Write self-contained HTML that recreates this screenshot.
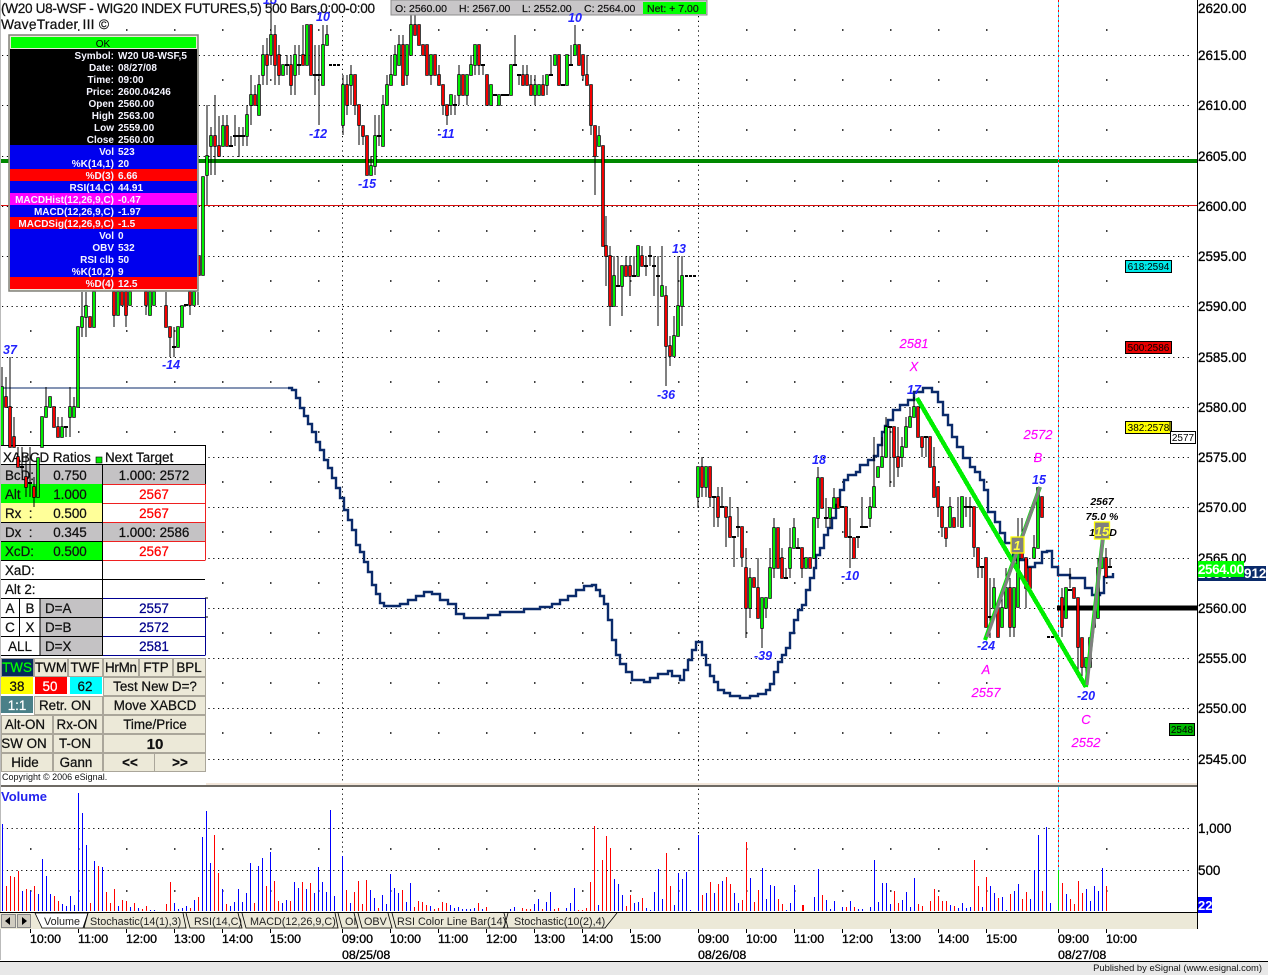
<!DOCTYPE html>
<html><head><meta charset="utf-8"><title>WaveTrader chart</title>
<style>
html,body{margin:0;padding:0;background:#fff}
svg{display:block;font-family:"Liberation Sans",Arial,sans-serif}
.ax{font-size:13.4px;fill:#000;stroke:#000;stroke-width:.3}
.t{font-size:12.4px;fill:#000;stroke:#000;stroke-width:.35;text-anchor:start}
.bl{font-size:12.5px;font-style:italic;font-weight:bold;fill:#2222ff;text-anchor:middle}
.mg{font-size:13px;font-style:italic;fill:#ff00ff;stroke:#ff00ff;stroke-width:.15;text-anchor:middle}
.bk{font-size:10.5px;font-style:italic;font-weight:bold;fill:#000;text-anchor:middle}
.l{font-size:10px;font-weight:bold;fill:#f4f4ff;text-anchor:end}
.v{font-size:10px;font-weight:bold;fill:#f4f4ff}
.tb{font-size:13.4px;fill:#111;stroke:#111;stroke-width:.25}
.c{text-anchor:middle}
.bt{font-size:13.4px;fill:#111;stroke:#111;stroke-width:.25;text-anchor:middle}
.br{fill:#ece9d8;stroke:#aaa69a;stroke-width:1}
.tag{font-size:10px;fill:#000;text-anchor:middle}
.o{font-size:10.5px;fill:#111;stroke:#111;stroke-width:.2}
.tab{font-size:10.8px;fill:#222}
</style></head><body>
<svg width="1268" height="975" viewBox="0 0 1268 975" xmlns="http://www.w3.org/2000/svg">
<defs>
<path id="dots" d="M30 0h1.5M78 0h1.5M126 0h1.5M174 0h1.5M222 0h1.5M270 0h1.5M318 0h1.5M390 0h1.5M438 0h1.5M486 0h1.5M534 0h1.5M582 0h1.5M630 0h1.5M678 0h1.5M746 0h1.5M794 0h1.5M842 0h1.5M890 0h1.5M938 0h1.5M986 0h1.5M1106 0h1.5" stroke="#000" stroke-width="1.5"/>
</defs>
<rect width="1268" height="975" fill="#fff"/>
<!-- dotted grid -->
<path d="M2 55.5H1190M2 105.5H1190M2 156.5H1190M2 206.5H1190M2 256.5H1190M2 306.5H1190M2 357.5H1190M2 407.5H1190M2 457.5H1190M2 507.5H1190M2 558.5H1190M2 608.5H1190M2 658.5H1190M2 708.5H1190M2 759.5H1190M2 828.5H1190M2 870.5H1190" stroke="#000" stroke-width="1" stroke-dasharray="1.2 3.6"/>
<use href="#dots" y="30"/><use href="#dots" y="80"/><use href="#dots" y="130"/><use href="#dots" y="181"/><use href="#dots" y="231"/><use href="#dots" y="281"/><use href="#dots" y="331"/><use href="#dots" y="382"/><use href="#dots" y="432"/><use href="#dots" y="482"/><use href="#dots" y="532"/><use href="#dots" y="583"/><use href="#dots" y="633"/><use href="#dots" y="683"/><use href="#dots" y="733"/><use href="#dots" y="849"/><use href="#dots" y="891"/>
<path d="M342.5 16V912M698.5 16V912" stroke="#000" stroke-width="1" stroke-dasharray="1.2 3.6"/>
<path d="M0 205.5H1197" stroke="#d81010" stroke-width="1"/>
<path d="M1 161H1197" stroke="#008800" stroke-width="4"/>
<path d="M1058.5 0V870" stroke="#30e0ff" stroke-width="1"/>
<path d="M1058.5 0V870" stroke="#ff0000" stroke-width="1" stroke-dasharray="2 3"/>
<path d="M1057 608H1197" stroke="#000" stroke-width="5"/>
<!-- navy stepped line -->
<path d="M0 388H288" stroke="#0a2a6a" stroke-width="1" fill="none"/>
<path fill="none" stroke="#0a2a6a" stroke-width="2.4" d="M288 388H292V390H296V398H300V408H304V416H308V424H312V432H316V442H320V450H324V460H328V468H332V478H336V488H340V498H344V510H348V520H352V530H356V545H360V552H364V562H368V572H372V585H376V594H380V603H384V606H392V606H400V604H408V600H416V596H424V592H432V594H440V600H448V604H456V614H464V618H476V618H488V615H500V612H512V612H524V609H540V607H552V604H560V600H568V596H576V590H584V586H592V585H596V590H600V596H604V604H608V620H612V640H616V655H620V664H626V672H632V680H644V682H650V678H658V674H668V671H672V676H680V680H684V670H688V660H692V650H696V642H700V642H702V655H706V665H710V676H714V682H718V690H724V693H730V696H740V698H750V696H758V694H766V690H770V684H774V672H778V662H782V655H786V648H790V633H794V620H798V610H802V605H806V590H810V578H814V568H816V555H820V548H824V535H828V528H832V518H836V505H840V490H844V480H848V475H856V472H860V465H868V460H874V456H878V445H882V432H885V426H888V420H893V410H900V405H908V400H914V392H923V388H932V392H938V402H943V415H948V425H952V437H957V447H963V458H970V467H975V472H980V480H984V490H988V512H995V522H1000V533H1005V543H1013V560H1027V567H1035V563H1042V552H1047V551H1052V567H1058V575H1070V578H1080V578H1085V588H1092V595H1100V593H1104V577H1113V573"/>
<!-- wicks -->
<path fill="none" stroke="#000" stroke-width="1" d="M2 367V467M6 377V397M10 357V407M14 417V447M46 387V407M58 417V427M62 417V427M66 427V437M70 387V437M74 397V407M82 292V337M86 292V337M114 315V327M126 315V327M146 305V315M166 292V306M170 337V357M174 327V357M190 305V315M198 292V305M207 105V205M211 127V175M215 95V175M219 116V157M223 115V146M227 115V126M231 136V146M235 115V146M239 127V157M243 127V146M247 105V146M251 75V125M255 85V105M259 75V115M263 45V85M267 38V85M271 0V65M275 25V85M279 45V85M287 55V75M291 55V95M295 45V95M299 45V75M303 25V65M315 45V95M319 45V125M323 25V85M327 25V35M343 75V135M347 75V115M351 65V105M355 75V115M359 105V145M363 126V145M371 156V175M375 115V175M379 115V146M383 95V146M387 75V105M391 55V85M395 45V75M399 35V65M403 35V85M407 45V85M411 15V55M415 15V35M431 55V85M439 65V85M443 105V115M447 105V125M451 95V115M455 95V115M459 65V105M467 75V105M471 55V75M475 45V75M479 45V75M483 65V75M515 35V65M519 75V85M523 65V85M527 65V85M531 75V95M535 75V105M543 75V95M547 75V95M551 55V75M571 45V65M575 25V55M583 55V80M587 55V85M591 125V135M595 156V195M599 126V136M606 216V286M610 246V326M614 256V306M618 256V286M622 266V316M626 256V266M630 256V296M634 256V276M642 246V256M646 256V276M650 246V266M654 256V296M658 256V326M662 246V286M666 286V386M670 336V366M674 316V336M678 256V306M682 256V326M698 497V508M702 457V497M706 487V497M710 497V507M714 497V527M718 487V527M722 487V507M726 517V547M730 497V517M734 537V567M738 507V537M742 557V567M746 548V638M750 568V618M758 558V588M762 628V648M766 608V618M770 548V568M774 518V578M782 548V558M786 568V578M790 528V578M794 518V528M798 538V548M802 568V578M818 467V528M826 498V528M830 518V528M834 488V498M850 518V568M858 537V548M862 497V527M870 497V527M874 437V487M882 437V457M886 417V427M890 427V487M894 457V487M898 427V477M902 437V467M906 417V427M910 407V417M914 397V407M922 447V457M926 437V457M934 447V467M938 507V517M942 527V537M946 538V547M950 497V507M958 497V527M966 497V517M970 497V527M974 547V557M978 567V578M982 567V578M990 578V638M994 578V588M1002 598V608M1006 568V588M1010 578V637M1014 627V637M1018 518V538M1022 518V538M1026 588V608M1034 535V548M1062 588V598M1062 627V637M1070 568V588M1078 647V677M1082 667V677M1086 667V687M1098 558V568M1102 538V558M1106 548V558M1110 558V567"/>
<!-- doji -->
<path fill="none" stroke="#000" stroke-width="2" d="M64 427h4M172 347h4M184 305h4M229 146h4M233 136h4M237 136h4M241 136h4M285 65h4M297 65h4M313 75h4M317 75h4M377 136h4M453 105h4M481 65h4M493 95h4M501 95h4M505 95h4M513 65h4M517 75h4M549 75h4M561 85h4M569 65h4M616 286h4M632 276h4M644 266h4M648 256h4M652 266h4M656 276h4M712 497h4M720 507h4M732 537h4M736 527h4M784 578h4M796 548h4M824 518h4M840 507h4M848 537h4M856 537h4M860 527h4M864 527h4M888 427h4M924 437h4M964 507h4M968 507h4M980 567h4M988 617h4M1068 590h4M1108 567h4"/>
<path fill="none" stroke="#000" stroke-width="2" stroke-dasharray="3 1" d="M329 65H341M685 276H697M1047 637H1058"/>
<!-- green bodies -->
<path fill="#00ee00" stroke="#000" stroke-width="1.5" paint-order="stroke" d="M1 387h2V467h-2zM81 317h2V327h-2zM85 306h2V317h-2zM93 292h2V327h-2zM117 292h2V315h-2zM129 292h2V305h-2zM149 292h2V315h-2zM153 292h2V305h-2zM177 327h2V347h-2zM181 306h2V327h-2zM193 292h2V305h-2zM202 177h2V275h-2zM206 156h2V175h-2zM210 136h2V146h-2zM222 126h2V146h-2zM246 115h2V136h-2zM250 95h2V105h-2zM258 85h2V115h-2zM262 55h2V75h-2zM270 35h2V55h-2zM282 65h2V75h-2zM294 55h2V75h-2zM306 25h2V65h-2zM322 45h2V85h-2zM326 35h2V45h-2zM342 85h2V125h-2zM350 75h2V85h-2zM370 166h2V175h-2zM374 136h2V166h-2zM382 105h2V146h-2zM386 85h2V105h-2zM390 75h2V85h-2zM394 55h2V75h-2zM398 45h2V65h-2zM406 45h2V75h-2zM410 25h2V55h-2zM430 55h2V75h-2zM450 95h2V105h-2zM458 75h2V95h-2zM466 75h2V95h-2zM470 65h2V75h-2zM474 45h2V65h-2zM490 85h2V105h-2zM498 95h2V105h-2zM510 65h2V95h-2zM534 85h2V95h-2zM538 85h2V95h-2zM546 75h2V85h-2zM554 55h2V65h-2zM566 55h2V85h-2zM574 45h2V55h-2zM598 136h2V146h-2zM613 276h2V306h-2zM621 266h2V286h-2zM637 246h2V276h-2zM661 286h2V296h-2zM673 336h2V356h-2zM677 306h2V336h-2zM681 276h2V306h-2zM697 467h2V497h-2zM705 467h2V487h-2zM749 578h2V608h-2zM761 598h2V628h-2zM765 598h2V608h-2zM769 568h2V598h-2zM773 528h2V568h-2zM789 548h2V568h-2zM793 528h2V548h-2zM805 558h2V568h-2zM813 518h2V558h-2zM817 478h2V518h-2zM829 508h2V518h-2zM833 498h2V508h-2zM869 507h2V518h-2zM873 487h2V507h-2zM877 467h2V477h-2zM881 457h2V467h-2zM885 427h2V457h-2zM901 447h2V457h-2zM905 427h2V447h-2zM909 417h2V427h-2zM913 407h2V417h-2zM949 507h2V527h-2zM961 497h2V527h-2zM993 588h2V608h-2zM1001 608h2V627h-2zM1005 588h2V608h-2zM1013 588h2V627h-2zM1017 538h2V607h-2zM1033 548h2V558h-2zM1037 488h2V548h-2zM1065 588h2V618h-2zM1085 658h2V667h-2zM1089 638h2V667h-2zM1093 618h2V627h-2zM1097 568h2V618h-2zM1101 558h2V568h-2z"/>
<!-- red bodies -->
<path fill="#f40000" stroke="#000" stroke-width="1.5" paint-order="stroke" d="M89 317h2V327h-2zM113 292h2V315h-2zM121 292h2V305h-2zM125 292h2V315h-2zM145 292h2V305h-2zM165 306h2V327h-2zM169 327h2V337h-2zM189 292h2V305h-2zM198 256h2V275h-2zM214 136h2V146h-2zM218 146h2V156h-2zM226 126h2V146h-2zM254 95h2V105h-2zM266 55h2V65h-2zM274 35h2V65h-2zM278 55h2V75h-2zM290 65h2V85h-2zM302 55h2V65h-2zM310 25h2V75h-2zM346 85h2V105h-2zM354 75h2V105h-2zM358 105h2V125h-2zM362 126h2V136h-2zM366 136h2V175h-2zM402 45h2V85h-2zM414 25h2V35h-2zM418 25h2V45h-2zM422 45h2V55h-2zM426 45h2V75h-2zM434 55h2V75h-2zM438 75h2V85h-2zM442 85h2V105h-2zM446 105h2V115h-2zM462 75h2V95h-2zM478 45h2V65h-2zM486 75h2V105h-2zM522 75h2V85h-2zM526 75h2V85h-2zM530 85h2V95h-2zM542 85h2V95h-2zM558 55h2V85h-2zM578 45h2V65h-2zM582 55h2V75h-2zM586 75h2V85h-2zM590 85h2V125h-2zM594 126h2V156h-2zM602 146h2V246h-2zM605 246h2V256h-2zM609 256h2V306h-2zM625 266h2V276h-2zM629 266h2V276h-2zM641 256h2V266h-2zM665 296h2V346h-2zM669 346h2V356h-2zM701 467h2V487h-2zM709 467h2V497h-2zM717 497h2V517h-2zM725 507h2V517h-2zM729 517h2V537h-2zM741 527h2V557h-2zM745 568h2V608h-2zM753 578h2V587h-2zM757 588h2V618h-2zM777 528h2V568h-2zM781 558h2V578h-2zM801 548h2V568h-2zM809 558h2V568h-2zM821 478h2V508h-2zM837 498h2V508h-2zM845 507h2V537h-2zM853 538h2V558h-2zM893 427h2V457h-2zM897 457h2V467h-2zM917 407h2V437h-2zM921 437h2V447h-2zM929 437h2V467h-2zM933 467h2V497h-2zM937 487h2V507h-2zM941 507h2V527h-2zM945 528h2V538h-2zM953 518h2V527h-2zM973 507h2V547h-2zM977 548h2V567h-2zM985 558h2V627h-2zM997 608h2V637h-2zM1009 588h2V627h-2zM1021 538h2V558h-2zM1025 558h2V588h-2zM1029 568h2V588h-2zM1041 497h2V517h-2zM1061 598h2V627h-2zM1073 588h2V598h-2zM1077 598h2V647h-2zM1081 638h2V667h-2zM1105 558h2V577h-2z"/>
<!-- pattern lines -->
<path d="M917 398L1086 687" stroke="#00ee00" stroke-width="4.5" fill="none" shape-rendering="crispEdges"/>
<path d="M985 640L1040 487M1086 687L1103 537" stroke="#00ee00" stroke-width="4" fill="none"/>
<path d="M987 637L1040 487M1087 685L1103 537" stroke="#808080" stroke-width="3.2" fill="none"/>
<rect x="1011" y="537" width="13" height="16" fill="#808080" stroke="#ffff00" stroke-width="1.3"/>
<rect x="1094.500" y="522" width="15" height="17" fill="#808080" stroke="#ffff00" stroke-width="1.3"/>
<text x="1017" y="550" font-size="13" font-style="italic" font-weight="bold" fill="#ffff40" text-anchor="middle">1</text>
<text x="1102" y="536" font-size="13" font-style="italic" font-weight="bold" fill="#ffff40" text-anchor="middle">15</text>
<!-- volume bars -->
<path fill="none" stroke="#0000ff" stroke-width="1" d="M2.500 911V824M22.500 911V891M30.500 911V891M38.500 911V894M42.500 911V859M46.500 911V876M50.500 911V894M62.500 911V904M66.500 911V906M70.500 911V896M74.500 911V905M78.500 911V793M82.500 911V813M86.500 911V845M94.500 911V861M102.500 911V867M118.500 911V906M130.500 911V907M138.500 911V908M150.500 911V910M154.500 911V910M174.500 911V903M178.500 911V909M182.500 911V908M186.500 911V906M194.500 911V900M202.500 911V837M206.500 911V811M210.500 911V863M222.500 911V889M230.500 911V906M234.500 911V902M238.500 911V889M242.500 911V902M246.500 911V893M250.500 911V863M258.500 911V866M262.500 911V858M270.500 911V852M282.500 911V903M286.500 911V900M294.500 911V882M298.500 911V888M306.500 911V889M314.500 911V893M318.500 911V867M322.500 911V882M326.500 911V892M330.500 911V810M334.500 911V896M342.500 911V856M350.500 911V903M370.500 911V890M374.500 911V898M382.500 911V895M386.500 911V904M390.500 911V874M394.500 911V888M398.500 911V893M406.500 911V902M410.500 911V883M430.500 911V906M450.500 911V905M454.500 911V908M458.500 911V907M462.500 911V909M466.500 911V909M470.500 911V909M474.500 911V908M482.500 911V909M510.500 911V909M514.500 911V907M534.500 911V904M538.500 911V899M546.500 911V902M550.500 911V892M566.500 911V908M570.500 911V903M574.500 911V888M598.500 911V905M614.500 911V879M618.500 911V884M622.500 911V895M634.500 911V903M638.500 911V902M646.500 911V908M650.500 911V910M654.500 911V892M658.500 911V869M662.500 911V899M674.500 911V905M678.500 911V873M682.500 911V879M686.500 911V872M690.500 911V910M698.500 911V835M706.500 911V893M714.500 911V893M722.500 911V881M734.500 911V893M738.500 911V903M750.500 911V878M762.500 911V868M766.500 911V899M770.500 911V885M774.500 911V886M786.500 911V910M790.500 911V903M794.500 911V885M814.500 911V897M818.500 911V869M826.500 911V900M830.500 911V909M834.500 911V901M842.500 911V907M850.500 911V901M858.500 911V909M862.500 911V909M870.500 911V907M874.500 911V860M878.500 911V902M882.500 911V883M886.500 911V883M890.500 911V904M902.500 911V900M906.500 911V892M910.500 911V907M914.500 911V878M950.500 911V905M958.500 911V908M962.500 911V903M966.500 911V908M970.500 911V907M982.500 911V907M990.500 911V886M994.500 911V893M1002.500 911V897M1006.500 911V910M1014.500 911V891M1018.500 911V884M1030.500 911V899M1034.500 911V870M1038.500 911V835M1046.500 911V827M1050.500 911V903M1066.500 911V894M1086.500 911V889M1090.500 911V901M1094.500 911V886M1098.500 911V891M1102.500 911V868"/>
<path fill="none" stroke="#ff0000" stroke-width="1" d="M6.500 911V886M10.500 911V876M14.500 911V877M18.500 911V871M26.500 911V889M34.500 911V886M54.500 911V896M58.500 911V901M90.500 911V903M98.500 911V866M106.500 911V892M110.500 911V903M114.500 911V889M122.500 911V900M126.500 911V901M134.500 911V903M142.500 911V909M146.500 911V906M166.500 911V904M170.500 911V882M190.500 911V908M198.500 911V897M214.500 911V835M218.500 911V873M226.500 911V904M254.500 911V903M266.500 911V886M274.500 911V881M278.500 911V901M290.500 911V901M302.500 911V882M310.500 911V883M346.500 911V890M354.500 911V892M358.500 911V881M362.500 911V904M366.500 911V880M378.500 911V908M402.500 911V890M414.500 911V907M418.500 911V901M422.500 911V902M426.500 911V905M434.500 911V909M438.500 911V908M442.500 911V902M446.500 911V903M478.500 911V903M486.500 911V907M522.500 911V908M526.500 911V909M530.500 911V909M542.500 911V909M554.500 911V909M558.500 911V908M578.500 911V910M582.500 911V910M586.500 911V908M590.500 911V882M594.500 911V826M602.500 911V860M606.500 911V836M610.500 911V848M626.500 911V906M630.500 911V895M642.500 911V898M666.500 911V853M670.500 911V886M702.500 911V895M710.500 911V882M718.500 911V884M726.500 911V877M730.500 911V884M742.500 911V900M746.500 911V842M754.500 911V902M758.500 911V890M778.500 911V899M782.500 911V904M802.500 911V905M803.500 911V905M822.500 911V895M846.500 911V907M854.500 911V907M894.500 911V891M898.500 911V903M918.500 911V904M922.500 911V906M930.500 911V901M934.500 911V889M938.500 911V896M942.500 911V901M946.500 911V901M954.500 911V906M974.500 911V860M978.500 911V886M986.500 911V877M998.500 911V898M1010.500 911V894M1022.500 911V899M1026.500 911V892M1042.500 911V891M1062.500 911V883M1070.500 911V899M1074.500 911V904M1078.500 911V881M1082.500 911V893M1106.500 911V886"/>
<path d="M1058.500 911V870" stroke="#00e000" stroke-width="1"/>
<!-- separators -->
<rect x="0" y="783" width="1197" height="2" fill="#f2e6da"/>
<rect x="0" y="785" width="1197" height="2" fill="#6e6a64"/>
<!-- axis line -->
<path d="M1197.500 0V929" stroke="#000" stroke-width="1"/>
<rect x="0" y="0" width="1" height="960" fill="#bbb"/>
<!-- titles -->
<text x="1" y="13" font-size="13.600" textLength="374" lengthAdjust="spacing" fill="#111" stroke="#111" stroke-width=".25">(W20 U8-WSF - WIG20 INDEX FUTURES,5) 500 Bars,0:00-0:00</text>
<text x="1" y="29" font-size="13.800" textLength="108" lengthAdjust="spacing" fill="#111" stroke="#111" stroke-width=".25">WaveTrader III ©</text>
<rect x="391" y="0" width="316" height="15" fill="#c8c6c8" stroke="#8c8c8c" stroke-width="1"/>
<text x="395" y="12" class="o">O: 2560.00</text><text x="459" y="12" class="o">H: 2567.00</text><text x="522" y="12" class="o">L: 2552.00</text><text x="584" y="12" class="o">C: 2564.00</text>
<rect x="643" y="2" width="63" height="12" fill="#00ff00"/><text x="647" y="12" class="o">Net: + 7.00</text>
<!-- labels -->
<text x="323" y="21" class="bl">10</text><text x="575" y="22" class="bl">10</text><text x="270" y="4" class="bl">15</text><text x="318" y="138" class="bl">-12</text><text x="367" y="188" class="bl">-15</text><text x="446" y="138" class="bl">-11</text><text x="679" y="253" class="bl">13</text><text x="666" y="399" class="bl">-36</text><text x="10" y="354" class="bl">37</text><text x="171" y="369" class="bl">-14</text><text x="819" y="464" class="bl">18</text><text x="850" y="580" class="bl">-10</text><text x="763" y="660" class="bl">-39</text><text x="914" y="394" class="bl">17</text><text x="1039" y="484" class="bl">15</text><text x="986" y="650" class="bl">-24</text><text x="1086" y="700" class="bl">-20</text>
<text x="914" y="348" class="mg">2581</text><text x="914" y="371" class="mg">X</text><text x="1038" y="439" class="mg">2572</text><text x="1038" y="462" class="mg">B</text><text x="986" y="674" class="mg">A</text><text x="986" y="697" class="mg">2557</text><text x="1086" y="724" class="mg">C</text><text x="1086" y="747" class="mg">2552</text>
<text x="1102" y="505" class="bk">2567</text><text x="1102" y="520" class="bk">75.0 %</text><text x="1092" y="536" class="bk">1</text><text x="1113" y="536" class="bk">D</text>
<!-- tags -->
<rect x="1125.500" y="260.500" width="46" height="12" fill="#00e8e8" stroke="#000"/><text x="1148.500" y="270" class="tag">618:2594</text>
<rect x="1125.500" y="341.500" width="46" height="12" fill="#e80000" stroke="#000"/><text x="1148.500" y="351" class="tag">500:2586</text>
<rect x="1125.500" y="421.500" width="46" height="12" fill="#ffff00" stroke="#000"/><text x="1148.500" y="431" class="tag">382:2578</text>
<path d="M1170 421V431" stroke="#000"/>
<rect x="1170.500" y="431.500" width="25" height="12" fill="#fff" stroke="#000"/><text x="1183" y="441" class="tag">2577</text>
<rect x="1169.500" y="723.500" width="25" height="12" fill="#00b800" stroke="#000"/><text x="1182" y="733" class="tag">2548</text>
<!-- axis labels -->
<g class="ax"><text x="1198" y="13">2620.00</text><text x="1198" y="60">2615.00</text><text x="1198" y="110">2610.00</text><text x="1198" y="161">2605.00</text><text x="1198" y="211">2600.00</text><text x="1198" y="261">2595.00</text><text x="1198" y="311">2590.00</text><text x="1198" y="362">2585.00</text><text x="1198" y="412">2580.00</text><text x="1198" y="462">2575.00</text><text x="1198" y="512">2570.00</text><text x="1198" y="563">2565.00</text><text x="1198" y="613">2560.00</text><text x="1198" y="663">2555.00</text><text x="1198" y="713">2550.00</text><text x="1198" y="764">2545.00</text><text x="1198" y="833">1,000</text><text x="1198" y="875">500</text></g>
<rect x="1198" y="566" width="68" height="15" fill="#0a2a6a"/><text y="578" font-size="13.400" fill="#fff" font-weight="bold"><tspan x="1198">2563.</tspan><tspan x="1244">912</tspan></text>
<rect x="1198" y="561" width="46" height="16" fill="#00ff00"/><text x="1198" y="574" font-size="13.400" fill="#fff" font-weight="bold" textLength="46">2564.00</text>
<rect x="1198" y="897" width="14" height="16" fill="#0000ff"/><text x="1198" y="910" font-size="13" font-weight="bold" fill="#fff">22</text>
<!-- info panel -->
<rect x="9" y="35" width="189" height="256" fill="#ece9d8" stroke="#808078" stroke-width="1.5"/>
<rect x="11" y="37" width="185" height="11" fill="#00ff00"/>
<rect x="10" y="49" width="187" height="96" fill="#000"/>
<rect x="10" y="145" width="187" height="144" fill="#0000ee"/>
<rect x="10" y="169" width="187" height="12" fill="#ff0000"/>
<rect x="10" y="193" width="187" height="12" fill="#ff00ff"/>
<rect x="10" y="217" width="187" height="12" fill="#ff0000"/>
<rect x="10" y="277" width="187" height="12" fill="#ff0000"/>
<text x="103" y="47" font-size="10" fill="#000" text-anchor="middle">OK</text>
<g class="l">
<text x="114" y="59" class="l">Symbol:</text><text x="114" y="71" class="l">Date:</text><text x="114" y="83" class="l">Time:</text><text x="114" y="95" class="l">Price:</text><text x="114" y="107" class="l">Open</text><text x="114" y="119" class="l">High</text><text x="114" y="131" class="l">Low</text><text x="114" y="143" class="l">Close</text><text x="114" y="155" class="l">Vol</text><text x="114" y="167" class="l">%K(14,1)</text><text x="114" y="179" class="l">%D(3)</text><text x="114" y="191" class="l">RSI(14,C)</text><text x="114" y="203" class="l">MACDHist(12,26,9,C)</text><text x="114" y="215" class="l">MACD(12,26,9,C)</text><text x="114" y="227" class="l">MACDSig(12,26,9,C)</text><text x="114" y="239" class="l">Vol</text><text x="114" y="251" class="l">OBV</text><text x="114" y="263" class="l">RSI clb</text><text x="114" y="275" class="l">%K(10,2)</text><text x="114" y="287" class="l">%D(4)</text>
</g>
<text x="118" y="59" class="v">W20 U8-WSF,5</text><text x="118" y="71" class="v">08/27/08</text><text x="118" y="83" class="v">09:00</text><text x="118" y="95" class="v">2600.04246</text><text x="118" y="107" class="v">2560.00</text><text x="118" y="119" class="v">2563.00</text><text x="118" y="131" class="v">2559.00</text><text x="118" y="143" class="v">2560.00</text><text x="118" y="155" class="v">523</text><text x="118" y="167" class="v">20</text><text x="118" y="179" class="v">6.66</text><text x="118" y="191" class="v">44.91</text><text x="118" y="203" class="v">-0.47</text><text x="118" y="215" class="v">-1.97</text><text x="118" y="227" class="v">-1.5</text><text x="118" y="239" class="v">0</text><text x="118" y="251" class="v">532</text><text x="118" y="263" class="v">50</text><text x="118" y="275" class="v">9</text><text x="118" y="287" class="v">12.5</text>
<!-- XABCD table -->
<rect x="1" y="445" width="205" height="340" fill="#fff"/>
<rect x="1" y="465" width="204" height="19" fill="#c4c2c4"/>
<rect x="1" y="522" width="204" height="19" fill="#c4c2c4"/>
<rect x="1" y="484" width="101" height="19" fill="#00ff00"/>
<rect x="1" y="503" width="101" height="19" fill="#ffff99"/>
<rect x="1" y="541" width="101" height="19" fill="#00ff00"/>
<rect x="40" y="598" width="62" height="57" fill="#c4c2c4"/>
<path d="M1 445.500H205.500V560M1 464.500H205M102.500 465V655M1 541.500H205M1 522.500H205M1 560.500H205M1 579.500H205M1 598.500H102M19.500 598V636M1 617.500H102M1 636.500H102M40 598V655M1 655.500H205" stroke="#000" stroke-width="1" fill="none"/>
<path d="M103 484.500H205.500M103 503.500H205.500M103 522.500H205.500M103 541.500H205.500M103 560.500H205.500M205.500 484V560" stroke="#ee2020" stroke-width="1" fill="none"/>
<path d="M103 598.500H205.500V655M103 617.500H205.500M103 636.500H205.500M103 655.500H205.500" stroke="#000090" stroke-width="1" fill="none"/>
<path d="M205 598h3M205 617h3" stroke="#000"/>
<text x="3" y="462" class="tb">XABCD Ratios</text><rect x="96" y="457" width="6" height="6" fill="#00ee00" stroke="#000" stroke-width=".6"/><text x="105" y="462" class="tb">Next Target</text>
<text x="5" y="480" class="tb">BcD:</text><text x="70" y="480" class="tb c">0.750</text><text x="154" y="480" class="tb c">1.000: 2572</text>
<text x="5" y="499" class="tb">Alt</text><text x="70" y="499" class="tb c">1.000</text><text x="154" y="499" class="tb c" style="fill:#f00;stroke:#f00">2567</text>
<text x="5" y="518" class="tb">Rx&#160;&#160;:</text><text x="70" y="518" class="tb c">0.500</text><text x="154" y="518" class="tb c" style="fill:#f00;stroke:#f00">2567</text>
<text x="5" y="537" class="tb">Dx&#160;&#160;:</text><text x="70" y="537" class="tb c">0.345</text><text x="154" y="537" class="tb c">1.000: 2586</text>
<text x="5" y="556" class="tb">XcD:</text><text x="70" y="556" class="tb c">0.500</text><text x="154" y="556" class="tb c" style="fill:#f00;stroke:#f00">2567</text>
<text x="5" y="575" class="tb">XaD:</text><text x="5" y="594" class="tb">Alt 2:</text>
<text x="10" y="613" class="tb c">A</text><text x="30" y="613" class="tb c">B</text><text x="45" y="613" class="tb">D=A</text><text x="154" y="613" class="tb c" style="fill:#00008c;stroke:#00008c">2557</text>
<text x="10" y="632" class="tb c">C</text><text x="30" y="632" class="tb c">X</text><text x="45" y="632" class="tb">D=B</text><text x="154" y="632" class="tb c" style="fill:#00008c;stroke:#00008c">2572</text>
<text x="20" y="651" class="tb c">ALL</text><text x="45" y="651" class="tb">D=X</text><text x="154" y="651" class="tb c" style="fill:#00008c;stroke:#00008c">2581</text>
<!-- candles over table -->
<path fill="none" stroke="#000" stroke-width="1" d="M18 447V457M22 447V473M26 455V497M30 447V497M34 477V507"/>
<path fill="none" stroke="#000" stroke-width="2" d="M20 467h4M28 483h4"/>
<path fill="#00ee00" stroke="#000" stroke-width="1.5" paint-order="stroke" d="M37 458h2V497h-2zM41 417h2V447h-2zM45 407h2V417h-2zM49 397h2V407h-2zM61 427h2V437h-2zM69 407h2V417h-2zM73 407h2V417h-2zM77 327h2V407h-2z"/>
<path fill="#f40000" stroke="#000" stroke-width="1.5" paint-order="stroke" d="M5 397h2V407h-2zM9 407h2V447h-2zM13 437h2V447h-2zM17 457h2V467h-2zM25 477h2V487h-2zM33 487h2V497h-2zM53 407h2V427h-2zM57 427h2V437h-2z"/>
<!-- buttons -->
<rect x="1.500" y="658.500" width="32" height="18" fill="#062a5a" stroke="#999"/><text x="17" y="672" class="bt" style="fill:#00ff00;stroke:#00ff00">TWS</text>
<rect x="34.500" y="658.500" width="33" height="18" class="br"/><text x="51" y="672" class="bt">TWM</text>
<rect x="68.500" y="658.500" width="34" height="18" class="br"/><text x="85" y="672" class="bt">TWF</text>
<rect x="103.500" y="658.500" width="35" height="18" class="br"/><text x="121" y="672" class="bt" textLength="32">HrMn</text>
<rect x="139.500" y="658.500" width="33" height="18" class="br"/><text x="156" y="672" class="bt">FTP</text>
<rect x="173.500" y="658.500" width="32" height="18" class="br"/><text x="189" y="672" class="bt">BPL</text>
<rect x="1" y="677" width="32" height="17" fill="#ffff00"/><text x="17" y="691" class="bt">38</text>
<rect x="35" y="677" width="32" height="17" fill="#ff0000"/><text x="50" y="691" class="bt" style="fill:#fff;stroke:#fff">50</text>
<rect x="70" y="677" width="32" height="17" fill="#00ffff"/><text x="85" y="691" class="bt">62</text>
<rect x="103.500" y="677.500" width="102" height="18" class="br"/><text x="155" y="691" class="bt">Test New D=?</text>
<rect x="1" y="696" width="32" height="17" fill="#4a8088"/><text x="17" y="710" class="bt" style="fill:#fff;stroke:#fff">1:1</text>
<rect x="34.500" y="696.500" width="68" height="18" class="br"/><text x="65" y="710" class="bt">Retr. ON</text>
<rect x="103.500" y="696.500" width="102" height="18" class="br"/><text x="155" y="710" class="bt">Move XABCD</text>
<rect x="1.500" y="715.500" width="51" height="18" class="br"/><text x="25" y="729" class="bt">Alt-ON</text>
<rect x="53.500" y="715.500" width="49" height="18" class="br"/><text x="77" y="729" class="bt">Rx-ON</text>
<rect x="103.500" y="715.500" width="102" height="18" class="br"/><text x="155" y="729" class="bt">Time/Price</text>
<rect x="1.500" y="734.500" width="51" height="18" class="br"/><text x="24" y="748" class="bt">SW ON</text>
<rect x="53.500" y="734.500" width="49" height="18" class="br"/><text x="75" y="748" class="bt">T-ON</text>
<rect x="103.500" y="734.500" width="102" height="18" class="br"/><text x="155" y="749" class="bt" font-weight="bold" style="font-size:15px">10</text>
<rect x="1.500" y="753.500" width="51" height="18" class="br"/><text x="25" y="767" class="bt">Hide</text>
<rect x="53.500" y="753.500" width="49" height="18" class="br"/><text x="76" y="767" class="bt">Gann</text>
<rect x="103.500" y="753.500" width="51" height="18" class="br"/><text x="130" y="767" class="bt" font-weight="bold">&lt;&lt;</text>
<rect x="154.500" y="753.500" width="51" height="18" class="br"/><text x="180" y="767" class="bt" font-weight="bold">&gt;&gt;</text>
<text x="2" y="780" font-size="9" fill="#111">Copyright © 2006 eSignal.</text>
<!-- volume title -->
<text x="1" y="801" font-size="13" font-weight="bold" fill="#2222ee">Volume</text>
<!-- tabs -->
<rect x="0" y="912" width="1197" height="17" fill="#ece9d8"/>
<path d="M0 912.500H1197.500" stroke="#000"/>
<rect x="1.500" y="914.500" width="14" height="13" fill="#d0ccc0" stroke="#888"/><path d="M10 917v8l-5-4z" fill="#000"/>
<rect x="17.500" y="914.500" width="13" height="13" fill="#d0ccc0" stroke="#888"/><path d="M22 917v8l5-4z" fill="#000"/>
<path d="M35 913L42 928H83L88 913z" fill="#fff" stroke="#000" stroke-width=".8"/>
<path d="M88 913L84 928H186L183 913M186 913L190 928H242L238 913M242 913L246 928H338L335 913M338 913L342 928H358L354 913M358 913L362 928H392L388 913M392 913L396 928H508L504 913M508 913L504 928H605L617 913" fill="none" stroke="#000" stroke-width=".8"/>
<text x="44" y="925" class="tab">Volume</text><text x="90" y="925" class="tab">Stochastic(14(1),3)</text><text x="194" y="925" class="tab">RSI(14,C)</text><text x="250" y="925" class="tab">MACD(12,26,9,C)</text><text x="345" y="925" class="tab">OI</text><text x="364" y="925" class="tab">OBV</text><text x="397" y="925" class="tab">RSI Color Line Bar(14)</text><text x="514" y="925" class="tab">Stochastic(10(2),4)</text>
<!-- time axis -->
<path d="M30.500 929v4M78.500 929v4M126.500 929v4M174.500 929v4M222.500 929v4M270.500 929v4M342.500 929v4M390.500 929v4M438.500 929v4M486.500 929v4M534.500 929v4M582.500 929v4M630.500 929v4M698.500 929v4M746.500 929v4M794.500 929v4M842.500 929v4M890.500 929v4M938.500 929v4M986.500 929v4M1058.500 929v4M1106.500 929v4" stroke="#000"/>
<g class="t"><text x="30" y="943" class="t">10:00</text><text x="78" y="943" class="t">11:00</text><text x="126" y="943" class="t">12:00</text><text x="174" y="943" class="t">13:00</text><text x="222" y="943" class="t">14:00</text><text x="270" y="943" class="t">15:00</text><text x="342" y="943" class="t">09:00</text><text x="390" y="943" class="t">10:00</text><text x="438" y="943" class="t">11:00</text><text x="486" y="943" class="t">12:00</text><text x="534" y="943" class="t">13:00</text><text x="582" y="943" class="t">14:00</text><text x="630" y="943" class="t">15:00</text><text x="698" y="943" class="t">09:00</text><text x="746" y="943" class="t">10:00</text><text x="794" y="943" class="t">11:00</text><text x="842" y="943" class="t">12:00</text><text x="890" y="943" class="t">13:00</text><text x="938" y="943" class="t">14:00</text><text x="986" y="943" class="t">15:00</text><text x="1058" y="943" class="t">09:00</text><text x="1106" y="943" class="t">10:00</text><text x="342" y="959" class="t">08/25/08</text><text x="698" y="959" class="t">08/26/08</text><text x="1058" y="959" class="t">08/27/08</text></g>
<!-- footer -->
<rect x="0" y="962" width="1268" height="13" fill="#e8e8e8"/>
<path d="M0 961.500H1268" stroke="#000"/>
<text x="1262" y="971" font-size="9.400" fill="#111" text-anchor="end">Published by eSignal (www.esignal.com)</text>
</svg>
</body></html>
